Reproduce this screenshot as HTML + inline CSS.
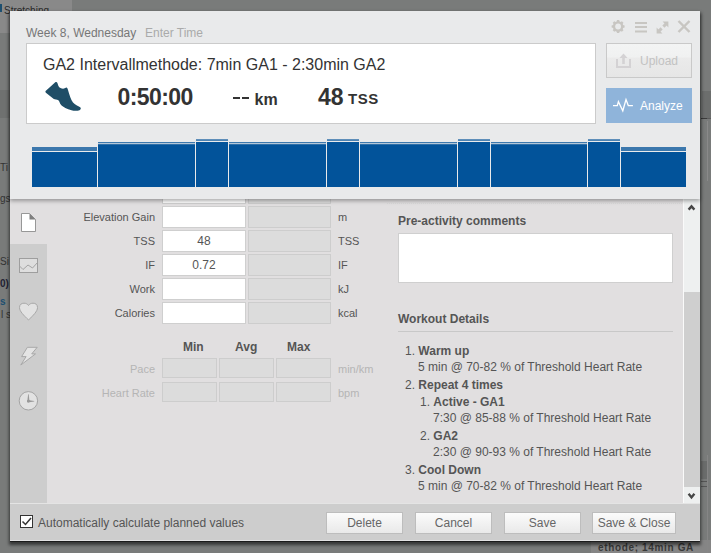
<!DOCTYPE html>
<html><head><meta charset="utf-8">
<style>
*{margin:0;padding:0;box-sizing:border-box}
html,body{width:711px;height:553px;overflow:hidden}
body{position:relative;background:#797b7a;font-family:"Liberation Sans",sans-serif;color:#555}
.a{position:absolute;white-space:nowrap}
#bgl{left:0;top:0;width:72px;height:33px;background:#898989}
#modal{left:10px;top:11px;width:690px;height:530px;background:#e1dfe0;box-shadow:0 1px 0 rgba(0,0,0,.5),0 3px 3px 1px rgba(0,0,0,.55)}
#hdr{left:10px;top:11px;width:690px;height:188px;background:#e9eaeb;box-shadow:0 2px 4px rgba(0,0,0,.33);z-index:5}
#side{left:10px;top:244px;width:37px;height:259px;background:#cdcdcd}
#foot{left:10px;top:503px;width:690px;height:38px;background:#cdcdcd;border-top:1px solid #e4e4e4;border-bottom:1px solid #e2e2e2}
#scroll{left:683px;top:199px;width:17px;height:304px;background:#eef0f0;border-left:1px solid #fafafa}
#thumb{left:684px;top:292px;width:16px;height:195px;background:#cfcfcf}
.lbl{font-size:11px;color:#555;text-align:right;width:100px;left:55px;margin-top:1px}
.inp{background:#fff;border:1px solid #cfcfcf;height:22px}
.dis{background:#dcdcdc;border:1px solid #cdcdcd;height:22px}
.unit{font-size:11px;color:#555;left:338px;margin-top:1px}
.btn{border:1px solid #bdbdbd;background:linear-gradient(#fbfbfb,#e9e9e9);font-size:12px;color:#666;text-align:center;height:22px;line-height:20px;top:512px}
.wd{font-size:12px;color:#555}
.wdb{font-size:12px;color:#555;font-weight:bold}
</style></head><body>
<div class="a" id="bgl"></div>
<div class="a" style="left:4px;top:5px;font-size:10px;color:#2a2a2a">Stretching</div>
<div class="a" style="left:0;top:4px;width:1.5px;height:8px;background:#1d4f70"></div>
<div class="a" style="left:0;top:90px;width:10px;height:28px;background:#6f7170"></div>
<div class="a" style="left:0;top:162px;font-size:10px;color:#333">Ti b</div>
<div class="a" style="left:0;top:193px;font-size:10px;color:#333">gs</div>
<div class="a" style="left:0;top:256px;font-size:10px;color:#333">Si</div>
<div class="a" style="left:0;top:278px;font-size:10px;font-weight:bold;color:#223">0)</div>
<div class="a" style="left:0;top:296px;font-size:10px;font-weight:bold;color:#1d4f70">s</div>
<div class="a" style="left:1px;top:309px;font-size:10px;color:#333">l s</div>
<div class="a" style="left:591px;top:540px;width:120px;height:13px;background:#858585"></div>
<div class="a" style="left:598px;top:542px;font-size:10px;letter-spacing:0.65px;font-weight:bold;color:#3a3a3a">ethode; 14min GA</div>
<div class="a" style="left:702px;top:91px;width:9px;height:27px;background:#6c6e6d"></div>
<div class="a" style="left:701px;top:118px;width:6px;height:1px;background:#3c3c3c"></div>
<div class="a" style="left:707px;top:118px;width:4px;height:1px;background:#5a5a5a"></div>
<div class="a" style="left:707px;top:121px;width:1px;height:60px;background:#8a8a8a"></div>
<div class="a" style="left:701px;top:461px;width:6px;height:18px;background:#6a6c6b"></div>
<div class="a" style="left:701px;top:481px;width:6px;height:1px;background:#555"></div>
<div class="a" style="left:701px;top:486px;width:6px;height:1px;background:#555"></div>
<div class="a" style="left:707px;top:455px;width:1px;height:98px;background:#868686"></div>
<div class="a" id="modal"></div>
<div class="a" id="hdr">
</div>
<!-- header content -->
<div class="a" style="z-index:6;left:0;top:0">
  <div class="a" style="left:26px;top:26px;font-size:12px;color:#777">Week 8, Wednesday</div>
  <div class="a" style="left:145px;top:26px;font-size:12px;color:#aaa">Enter Time</div>
  <div class="a" style="left:26px;top:43px;width:570px;height:81px;background:#fff;border:1px solid #cbcbcb"></div>
  <div class="a" style="left:43px;top:56px;font-size:16px;color:#333">GA2 Intervallmethode: 7min GA1 - 2:30min GA2</div>
  <svg class="a" style="left:0;top:0" width="711" height="200">
    <path d="M45.6 91 L55 82.6 C56 81.8 57 82 57.5 83.2 C58 85 58.5 87 60.5 88 C62.5 89 64.5 88.8 66.3 87.6 C67.2 87.5 67.6 88.5 68 90 C69.5 95 71 100 73 102.5 C75 105 78 106 80.2 107.2 C81.2 108 81 109.5 79.5 110.2 C77.5 111 74 111 71.5 110.3 C67 109 63 107 61.3 105.3 C59.5 103.5 59.5 101 58.3 100.3 C57 99.5 55 99.5 53.8 99 L46.2 93 C45.4 92.4 45.2 91.5 45.6 91Z" fill="#1f4e67"/>
  </svg>
  <div class="a" style="left:117.5px;top:84px;font-size:23px;letter-spacing:-0.6px;font-weight:bold;color:#333">0:50:00</div>
  <div class="a" style="left:233px;top:97px;width:6.8px;height:2.3px;background:#333"></div><div class="a" style="left:241.8px;top:97px;width:7px;height:2.3px;background:#333"></div>
  <div class="a" style="left:254.5px;top:91px;font-size:16px;font-weight:bold;color:#333">km</div>
  <div class="a" style="left:318px;top:84px;font-size:23px;font-weight:bold;color:#333">48</div>
  <div class="a" style="left:348px;top:90px;font-size:15px;letter-spacing:0.5px;font-weight:bold;color:#333">TSS</div>
  <!-- top-right icons -->
  <svg class="a" style="left:600px;top:14px" width="100" height="28">
    <g fill="#c8c6c2" transform="translate(18.1,12.5)">
      <circle r="5.2"/>
      <path d="M-1.1 -6.5 H1.1 L1.7 -4 H-1.7Z"/>
      <path d="M-1.1 -6.5 H1.1 L1.7 -4 H-1.7Z" transform="rotate(45)"/>
      <path d="M-1.1 -6.5 H1.1 L1.7 -4 H-1.7Z" transform="rotate(90)"/>
      <path d="M-1.1 -6.5 H1.1 L1.7 -4 H-1.7Z" transform="rotate(135)"/>
      <path d="M-1.1 -6.5 H1.1 L1.7 -4 H-1.7Z" transform="rotate(180)"/>
      <path d="M-1.1 -6.5 H1.1 L1.7 -4 H-1.7Z" transform="rotate(225)"/>
      <path d="M-1.1 -6.5 H1.1 L1.7 -4 H-1.7Z" transform="rotate(270)"/>
      <path d="M-1.1 -6.5 H1.1 L1.7 -4 H-1.7Z" transform="rotate(315)"/>
      <circle r="2.9" fill="#e9eaeb"/>
    </g>
    <g fill="#c8c6c2">
      <rect x="35" y="8" width="12" height="2"/>
      <rect x="35" y="12" width="12" height="2"/>
      <rect x="35" y="16.5" width="12" height="2"/>
    </g>
    <g fill="#c8c6c2">
      <path d="M62.6 7.6 L68.4 7.6 L68.4 13.4Z"/>
      <path d="M56.6 13.6 L56.6 19.4 L62.4 19.4Z"/>
    </g>
    <g stroke="#c8c6c2" stroke-width="3">
      <line x1="66.5" y1="9.5" x2="63.4" y2="12.6"/>
      <line x1="58.5" y1="17.5" x2="61.6" y2="14.4"/>
    </g>
    <g stroke="#c8c6c2" stroke-width="2.4">
      <line x1="78.5" y1="7" x2="89.5" y2="18"/>
      <line x1="89.5" y1="7" x2="78.5" y2="18"/>
    </g>
  </svg>
  <div class="a" style="left:606px;top:43px;width:86px;height:35px;border:1px solid #c9c9c9;background:linear-gradient(#f3f4f4 0%,#f0f1f1 40%,#ebebeb 42%,#e6e6e6 100%)"></div>
  <svg class="a" style="left:606px;top:43px" width="86" height="35">
    <g stroke="#d4d2d4" stroke-width="2" fill="none">
      <path d="M11 16 V24 H24 V16"/>
    </g>
    <line x1="17.5" y1="21" x2="17.5" y2="14" stroke="#d4d2d4" stroke-width="2.6"/>
    <path d="M13.5 15 L17.5 10.5 L21.5 15Z" fill="#d4d2d4"/>
  </svg>
  <div class="a" style="left:640px;top:54px;font-size:12px;color:#c2c2c2">Upload</div>
  <div class="a" style="left:606px;top:88px;width:86px;height:35px;background:#8fb4da"></div>
  <svg class="a" style="left:606px;top:88px" width="86" height="35">
    <path d="M7 17.6 H11.3 L12.4 13.6 L16.8 22.8 L20 11.5 L22.3 17.6 H26.9" stroke="#fff" stroke-width="1.3" fill="none"/>
  </svg>
  <div class="a" style="left:640px;top:99px;font-size:12px;color:#fff">Analyze</div>
  <!-- chart -->
  <svg class="a" style="left:0;top:130px" width="711" height="62">
    <g>
      <rect x="32" y="17" width="65" height="4" fill="#3c78ad"/>
      <rect x="32" y="22" width="65" height="35" fill="#02539a"/>
      <rect x="98" y="12" width="97" height="1.3" fill="#3c78ad"/>
      <rect x="98" y="14.2" width="97" height="42.8" fill="#02539a"/>
      <rect x="196" y="9.2" width="32" height="1.7" fill="#3c78ad"/>
      <rect x="196" y="12" width="32" height="45" fill="#02539a"/>
      <rect x="229" y="12" width="97" height="1.3" fill="#3c78ad"/>
      <rect x="229" y="14.2" width="97" height="42.8" fill="#02539a"/>
      <rect x="327" y="9.2" width="32" height="1.7" fill="#3c78ad"/>
      <rect x="327" y="12" width="32" height="45" fill="#02539a"/>
      <rect x="360" y="12" width="97" height="1.3" fill="#3c78ad"/>
      <rect x="360" y="14.2" width="97" height="42.8" fill="#02539a"/>
      <rect x="458" y="9.2" width="32" height="1.7" fill="#3c78ad"/>
      <rect x="458" y="12" width="32" height="45" fill="#02539a"/>
      <rect x="491" y="12" width="96" height="1.3" fill="#3c78ad"/>
      <rect x="491" y="14.2" width="96" height="42.8" fill="#02539a"/>
      <rect x="588" y="9.2" width="32" height="1.7" fill="#3c78ad"/>
      <rect x="588" y="12" width="32" height="45" fill="#02539a"/>
      <rect x="621" y="17" width="65" height="4" fill="#3c78ad"/>
      <rect x="621" y="22" width="65" height="35" fill="#02539a"/>
    </g>
  </svg>
</div>

<!-- body -->
<div class="a" id="side"></div>
<svg class="a" style="left:10px;top:199px" width="40" height="220">
  <path d="M11.5 14.5 H19.5 L25.5 20.5 V32.5 H11.5 Z" fill="#fff" stroke="#8c8c8c" stroke-width="0.9" stroke-linejoin="miter"/>
  <path d="M19.5 14.5 L25.5 20.5 H19.5Z" fill="#7f7f7f"/>
  <rect x="9.5" y="59.5" width="18" height="14" fill="#dedede" stroke="#9e9e9e"/>
  <path d="M9.5 67 L13 70.5 L18 66 L22.5 69 L27.5 63.5" stroke="#a4a4a4" fill="none"/>
  <path d="M18.5 121 C14 116.5 9.5 112.5 9.5 108.5 C9.5 105.5 11.5 104.2 14 104.2 C16 104.2 17.5 105 18.5 106.5 C19.5 105 21 104.2 23 104.2 C25.5 104.2 27.5 105.5 27.5 108.5 C27.5 112.5 23 116.5 18.5 121Z" fill="#e2e2e2" stroke="#a8a8a8"/>
  <path d="M17.4 148.3 H27.2 L21.7 154.9 H25.5 L10.8 166 L16.1 157.6 H11.6Z" fill="#e4e4e4" stroke="#a8a8a8" stroke-linejoin="miter"/>
  <circle cx="18.4" cy="201.8" r="9.2" fill="#e2e2e2" stroke="#a4a4a4"/>
  <path d="M17.3 202.8 L18.1 195.2 L18.7 195.2 L19.5 202.8Z" fill="#999"/>
  <path d="M17.6 201 L24.2 202 L24.2 202.6 L17.6 203.4Z" fill="#999"/>
  <circle cx="18.4" cy="202.2" r="1.4" fill="#999"/>
</svg>

<!-- form -->
<div class="a inp" style="left:162px;top:182px;width:84px"></div>
<div class="a dis" style="left:248px;top:182px;width:83px"></div>

<div class="a lbl" style="top:210px">Elevation Gain</div>
<div class="a inp" style="left:162px;top:206px;width:84px"></div>
<div class="a dis" style="left:248px;top:206px;width:83px"></div>
<div class="a unit" style="top:210px">m</div>

<div class="a lbl" style="top:234px">TSS</div>
<div class="a inp" style="left:162px;top:230px;width:84px;font-size:12px;text-align:center;line-height:20px;color:#555">48</div>
<div class="a dis" style="left:248px;top:230px;width:83px"></div>
<div class="a unit" style="top:234px">TSS</div>

<div class="a lbl" style="top:258px">IF</div>
<div class="a inp" style="left:162px;top:254px;width:84px;font-size:12px;text-align:center;line-height:20px;color:#555">0.72</div>
<div class="a dis" style="left:248px;top:254px;width:83px"></div>
<div class="a unit" style="top:258px">IF</div>

<div class="a lbl" style="top:282px">Work</div>
<div class="a inp" style="left:162px;top:278px;width:84px"></div>
<div class="a dis" style="left:248px;top:278px;width:83px"></div>
<div class="a unit" style="top:282px">kJ</div>

<div class="a lbl" style="top:306px">Calories</div>
<div class="a inp" style="left:162px;top:302px;width:84px"></div>
<div class="a dis" style="left:248px;top:302px;width:83px"></div>
<div class="a unit" style="top:306px">kcal</div>

<div class="a" style="left:183px;top:340px;font-size:12px;font-weight:bold;color:#555">Min</div>
<div class="a" style="left:235px;top:340px;font-size:12px;font-weight:bold;color:#555">Avg</div>
<div class="a" style="left:287px;top:340px;font-size:12px;font-weight:bold;color:#555">Max</div>

<div class="a lbl" style="top:362px;color:#b5b5b5">Pace</div>
<div class="a dis" style="left:162px;top:358px;width:55px;height:20px"></div>
<div class="a dis" style="left:219px;top:358px;width:55px;height:20px"></div>
<div class="a dis" style="left:276px;top:358px;width:55px;height:20px"></div>
<div class="a unit" style="top:362px;color:#b5b5b5">min/km</div>

<div class="a lbl" style="top:386px;color:#b5b5b5">Heart Rate</div>
<div class="a dis" style="left:162px;top:382px;width:55px;height:20px"></div>
<div class="a dis" style="left:219px;top:382px;width:55px;height:20px"></div>
<div class="a dis" style="left:276px;top:382px;width:55px;height:20px"></div>
<div class="a unit" style="top:386px;color:#b5b5b5">bpm</div>

<!-- right column -->
<div class="a" style="left:387px;top:203px;width:296px;height:1px;background:repeating-linear-gradient(90deg,#d8d8d8 0 1px,transparent 1px 2px)"></div>
<div class="a wdb" style="left:398px;top:214px">Pre-activity comments</div>
<div class="a" style="left:398px;top:233px;width:275px;height:50px;background:#fff;border:1px solid #cfcfcf"></div>
<div class="a wdb" style="left:398px;top:312px">Workout Details</div>
<div class="a" style="left:398px;top:331px;width:275px;height:1px;background:#c8c8c8"></div>

<div class="a wd" style="left:405px;top:344px">1. <b>Warm up</b></div>
<div class="a wd" style="left:418px;top:360px">5 min @ 70-82 % of Threshold Heart Rate</div>
<div class="a wd" style="left:405px;top:378px">2. <b>Repeat 4 times</b></div>
<div class="a wd" style="left:420px;top:395px">1. <b>Active - GA1</b></div>
<div class="a wd" style="left:433px;top:411px">7:30 @ 85-88 % of Threshold Heart Rate</div>
<div class="a wd" style="left:420px;top:429px">2. <b>GA2</b></div>
<div class="a wd" style="left:433px;top:445px">2:30 @ 90-93 % of Threshold Heart Rate</div>
<div class="a wd" style="left:405px;top:463px">3. <b>Cool Down</b></div>
<div class="a wd" style="left:418px;top:479px">5 min @ 70-82 % of Threshold Heart Rate</div>

<div class="a" id="scroll"></div>
<div class="a" id="thumb"></div>
<svg class="a" style="left:684px;top:199px" width="16" height="304">
  <path d="M4.6 10.6 L7.5 7.4 L10.4 10.6" stroke="#464646" stroke-width="2.4" fill="none"/>
  <path d="M4.6 294.8 L7.5 298.4 L10.4 294.8" stroke="#464646" stroke-width="2.4" fill="none"/>
</svg>

<!-- footer -->
<div class="a" id="foot"></div>
<svg class="a" style="left:20px;top:515px" width="14" height="14">
  <rect x="0.5" y="0.5" width="12" height="12" fill="#fff" stroke="#333"/>
  <path d="M2.5 6.5 L5.5 9.5 L11 3" stroke="#333" stroke-width="1.5" fill="none"/>
</svg>
<div class="a" style="left:38px;top:516px;font-size:12px;color:#555">Automatically calculate planned values</div>
<div class="a btn" style="left:326px;width:77px">Delete</div>
<div class="a btn" style="left:415px;width:77px">Cancel</div>
<div class="a btn" style="left:504px;width:77px">Save</div>
<div class="a btn" style="left:592px;width:84px">Save &amp; Close</div>

</body></html>
